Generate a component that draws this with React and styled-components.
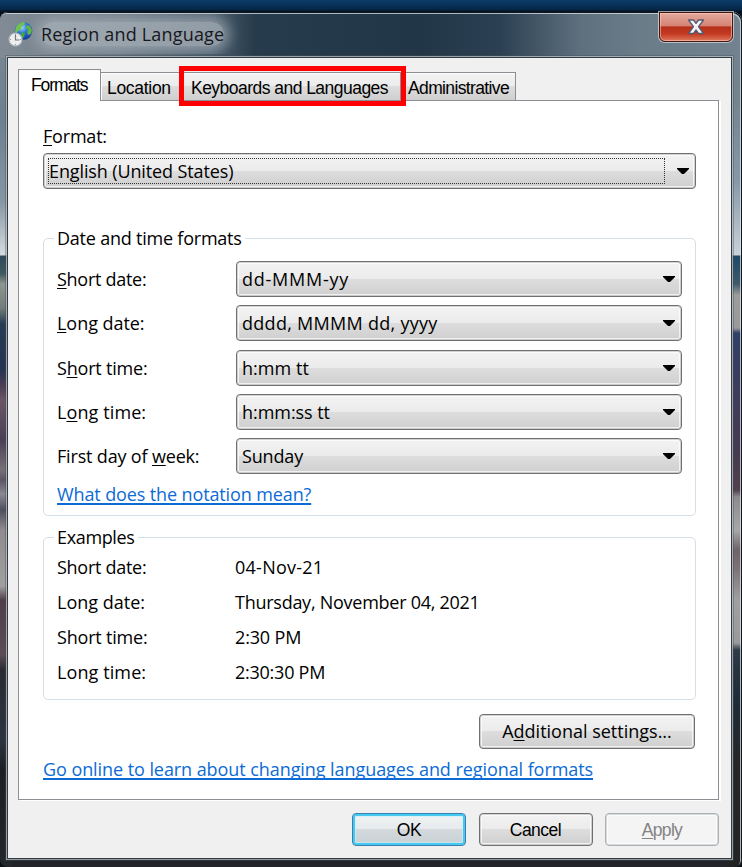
import React from 'react';
import styled, {createGlobalStyle, css} from 'styled-components';

const GlobalStyle = createGlobalStyle`
  *,
  *:before,
  *:after {
    box-sizing: border-box;
  }
  body {
    margin: 0;
    overflow: hidden;
  }
`;

const Desktop = styled.div`
  width: 742px;
  height: 867px;
  padding-top: 12px;
  overflow: hidden;
  background: linear-gradient(#0b3d69, #06294a 9px, #03111f 12px, #08131d 22px, #0c1116);
  color: #000;
  font-family: 'Open Sans', 'Noto Sans', sans-serif;
  font-size: 18px;
  line-height: 24px;
`;

const leftEdge = `linear-gradient(
  #7e8993 0, #6d808f 110px, #8797a4 190px, #d5dcdf 243px, #2e4a5a 244px,
  #3f5a5e 262px, #8f9692 272px, #727c78 296px, #263c55 312px, #253450 358px,
  #4d3d55 374px, #6a5566 388px, #4b3f55 428px, #767178 458px, #5b5566 468px,
  #8a8890 482px, #4e4e60 498px, #8f8b8e 518px, #a0a0a0 574px, #503f4a 588px,
  #5b4c55 643px, #2a2a33 658px, #2c3440 728px, #1d1f24 758px, #24272b 855px
)`;

const rightEdge = `linear-gradient(
  #6f7f8c 0, #74848f 90px, #8799a8 170px, #c9d2d9 243px, #1d4866 244px,
  #3f5a6c 272px, #9c9c99 283px, #9a9a9a 316px, #2f4066 321px, #3f3b5a 388px,
  #453a50 438px, #52404d 478px, #8d8a8c 485px, #a8a8a8 518px, #6e6468 538px,
  #7e7478 558px, #a0a0a0 588px, #9a9a9a 631px, #2d3a47 638px, #1d2c38 688px,
  #262626 748px, #232323 855px
)`;

const Window = styled.div`
  display: flex;
  flex-direction: column;
  width: 742px;
  height: 855px;
  border-radius: 8px 9px 8px 8px;
  background:
    ${leftEdge} 0 0 / 12px 100% no-repeat,
    ${rightEdge} 100% 0 / 12px 100% no-repeat,
    #22242a;
  box-shadow: inset -1px 1px 0 #10161b, inset -2px 2px 0 rgba(220, 228, 234, 0.75);
`;

const TitleBar = styled.div`
  display: flex;
  align-items: flex-start;
  height: 46px;
  padding-left: 8px;
  border-radius: 8px 9px 0 0;
  background: linear-gradient(90deg, #808b95, #6c7a86 120px, #4d5f6e 210px, #263b4b 255px, #213646 420px, #2b4053 500px, #5e707e 580px, #6b7c89 640px, #72828f);
  box-shadow: inset -1px 1px 0 #10161b, inset -2px 2px 0 rgba(220, 228, 234, 0.75);
`;

const TitleIcon = styled.svg`
  flex: none;
  width: 26px;
  height: 26px;
  margin-top: 9px;
`;

const Title = styled.div`
  height: 24px;
  margin: 10px auto 0 7px;
  border-radius: 12px;
  background: rgba(168, 178, 186, 0.75);
  box-shadow: 0 0 14px 5px rgba(168, 178, 186, 0.75);
  clip-path: inset(-8px -30px -8px -22px);
  color: #17171c;
  letter-spacing: 0.18px;
`;

const CloseButton = styled.div`
  display: flex;
  align-items: center;
  justify-content: center;
  width: 74px;
  height: 30px;
  margin-right: 9px;
  border: 1px solid #451512;
  border-radius: 0 0 6px 6px;
  background: linear-gradient(#e3a99d, #d58474 45%, #b7301a 50%, #c43a22 75%, #df7a5d);
  box-shadow: inset 0 0 0 1px rgba(255, 210, 195, 0.55), 0 0 0 1px rgba(215, 222, 228, 0.7);
`;

const Client = styled.div`
  display: flex;
  flex-direction: column;
  width: 723px;
  height: 800px;
  margin-left: 8px;
  padding-top: 11px;
  background: #f0f0f0;
  box-shadow: 0 0 0 1px #333a40, 0 0 0 2px rgba(205, 212, 218, 0.65), 0 0 0 3px rgba(70, 80, 88, 0.4);
`;

const Tabs = styled.div`
  display: flex;
  align-items: flex-end;
  height: 32px;
  padding-left: 10px;
`;

const Tab = styled.div`
  position: relative;
  width: ${({$width}) => $width}px;
  height: 28px;
  margin-bottom: 1px;
  padding-left: ${({$indent}) => $indent || 6}px;
  border: 1px solid #8c8e94;
  border-left-width: 0;
  border-bottom: none;
  background: linear-gradient(#f3f3f3, #ebebeb 50%, #dddddd 50%, #cfcfcf);
  box-shadow: inset 1px 1px 0 #fbfbfb;
  font: 17.5px/30px 'Liberation Sans', Arial, sans-serif;
  letter-spacing: ${({$track}) => $track || 0}px;
  white-space: nowrap;

  ${({$active}) => $active && css`
    z-index: 1;
    height: 32px;
    margin-bottom: 0;
    border-left-width: 1px;
    background: #fff;
  `}

  ${({$marked}) => $marked && css`
    z-index: 2;
    &:after {
      content: '';
      position: absolute;
      inset: -7px -6px -6px -1px;
      border: 5px solid #fe0000;
    }
  `}
`;

const Pane = styled.div`
  display: flex;
  flex-direction: column;
  width: 701px;
  height: 700px;
  margin: -1px 0 0 10px;
  padding: 22px 22px 0 24px;
  border: 1px solid #8c8e94;
  background: #fff;
  box-shadow: 2px 1px 0 #fff;
`;

const Label = styled.div`
  letter-spacing: ${({$track}) => $track || 0}px;
  line-height: 26px;
  white-space: nowrap;
`;

const Key = styled.span`
  text-decoration: underline;
  text-decoration-thickness: 1px;
  text-underline-offset: 2px;
`;

const Select = styled.div`
  display: flex;
  align-items: center;
  justify-content: space-between;
  height: 36px;
  margin-top: ${({$gap}) => $gap || 0}px;
  padding: 0 5px 0 4px;
  border: 1px solid #707070;
  border-radius: 4px;
  outline: 1px solid rgba(112, 112, 112, 0.3);
  outline-offset: -2px;
  background: linear-gradient(#f3f3f3, #ebebeb 50%, #dddddd 50%, #cfcfcf);
  box-shadow: inset 0 0 0 2px rgba(255, 255, 255, 0.7);
`;

const Value = styled.div`
  flex: 1;
  height: 26px;
  margin-right: ${({$focused}) => $focused ? 11 : 6}px;
  border: 1px ${({$focused}) => $focused ? 'dotted #333' : 'solid transparent'};
  letter-spacing: ${({$track}) => $track || 0}px;
  line-height: 24px;
`;

const Group = styled.div`
  height: ${({$height}) => $height}px;
  margin-top: ${({$gap}) => $gap}px;
  padding-left: 13px;
  border: 1px solid #d5dfe5;
  border-radius: 5px;
`;

const Legend = styled.div`
  width: max-content;
  height: 24px;
  margin: -13px 0 ${({$gap}) => $gap || 0}px -3px;
  padding: 0 3px;
  background: #fff;
  letter-spacing: ${({$track}) => $track || 0}px;
`;

const FormatGrid = styled.div`
  display: grid;
  grid-template-columns: 179px 446px;
  grid-auto-rows: 36px;
  row-gap: 8.25px;
  align-items: center;
`;

const ExampleGrid = styled.div`
  display: grid;
  grid-template-columns: 178px auto;
  grid-auto-rows: 35px;
  align-items: center;
`;

const TextLink = styled.a`
  display: block;
  width: max-content;
  margin-top: 8px;
  color: #0c6bd6;
  letter-spacing: ${({$track}) => $track || 0}px;
  text-decoration: underline;
  text-decoration-thickness: 1.5px;
  text-decoration-skip-ink: none;
  text-underline-offset: 2px;
  cursor: pointer;
`;

const variants = {
  normal: css`
    border-color: #707070;
    background: linear-gradient(#f3f3f3, #ebebeb 50%, #dddddd 50%, #cfcfcf);
    box-shadow: inset 0 0 0 1px rgba(112, 112, 112, 0.3), inset 0 0 0 2px rgba(255, 255, 255, 0.7);
  `,
  primary: css`
    border-color: #3c7fb1;
    background: linear-gradient(#f1f3f4, #e6eaec 50%, #d3d9dc 50%, #c9d1d4);
    box-shadow: inset 0 0 0 2px #45c9f0, inset 0 0 0 3px rgba(200, 240, 250, 0.6);
  `,
  disabled: css`
    border-color: #adb2b5;
    background: #f4f4f4;
    box-shadow: inset 0 0 0 1px #d5d8da, inset 0 0 0 2px #fcfcfc;
    color: #838383;
  `
};

const Button = styled.div`
  width: 114px;
  height: 33px;
  border: 1px solid;
  border-radius: 4px;
  font: 17.5px/33px 'Liberation Sans', Arial, sans-serif;
  letter-spacing: ${({$track}) => $track || 0}px;
  text-align: center;
  ${({$variant}) => variants[$variant || 'normal']}
`;

const SettingsButton = styled(Button)`
  align-self: flex-end;
  width: 216px;
  height: 35px;
  margin: 14px 1px 0 0;
  font: 18px/32px 'Open Sans', 'Noto Sans', sans-serif;
`;

const Footer = styled.div`
  display: flex;
  justify-content: flex-end;
  gap: 12.5px;
  padding: 13px 12px 0 0;
`;

const Arrow = () => (
  <svg width="14" height="8" viewBox="0 0 14 8">
    <path d="M1 1h12v1l-5 5h-2l-5-5z" fill="#000" />
  </svg>
);

const GlobeClock = () => (
  <TitleIcon viewBox="0 0 26 26">
    <defs>
      <radialGradient id="globe" cx="0.4" cy="0.3" r="0.75">
        <stop offset="0" stopColor="#9fdcf8" />
        <stop offset="0.45" stopColor="#2b6fd6" />
        <stop offset="1" stopColor="#0b2f93" />
      </radialGradient>
    </defs>
    <circle cx="15.5" cy="10" r="8.8" fill="url(#globe)" />
    <path d="M8 6c2-3 5-5 8-5l1 2-3 2-1 3-3 2-2 3-1-3z" fill="#6fc24b" />
    <path d="M19 4l3 1 2 4-1 4-3 1-1-3 1-2-2-2z" fill="#55b53c" />
    <path d="M14 11l3 1-1 4-2 2-2-3z" fill="#3fa548" />
    <circle cx="7.5" cy="18.5" r="6.5" fill="#eceef0" stroke="#b0b5ba" strokeWidth="1.2" />
    <path d="M7.5 14v5h4" fill="none" stroke="#72787e" strokeWidth="1.2" />
    <path d="M7.5 13v1M7.5 23v1M2 18.5h1M12 18.5h1" stroke="#999" />
  </TitleIcon>
);

const CloseMark = () => (
  <svg width="20" height="18" viewBox="0 0 20 18">
    <path
      d="M2.5 2h5L10 5.4 12.5 2h5l-5 6.7 5 6.8h-5L10 12l-2.5 3.5h-5l5-6.8z"
      fill="#f5f5f6"
      stroke="#565a70"
      strokeWidth="1.3"
      strokeLinejoin="round"
    />
  </svg>
);

const formats = [
  {id: 'sd', label: <><Key>S</Key>hort date:</>, track: -0.28, value: 'dd-MMM-yy', valueTrack: 0.75},
  {id: 'ld', label: <><Key>L</Key>ong date:</>, track: -0.05, value: 'dddd, MMMM dd, yyyy', valueTrack: 0.28},
  {id: 'st', label: <>S<Key>h</Key>ort time:</>, track: -0.2, value: 'h:mm tt', valueTrack: 0.05},
  {id: 'lt', label: <>L<Key>o</Key>ng time:</>, track: 0.1, value: 'h:mm:ss tt', valueTrack: -0.05},
  {id: 'fd', label: <>First day of <Key>w</Key>eek:</>, track: -0.17, value: 'Sunday', valueTrack: -0.15}
];

const examples = [
  {label: 'Short date:', labelTrack: -0.28, value: '04-Nov-21', track: 0.25},
  {label: 'Long date:', labelTrack: 0, value: 'Thursday, November 04, 2021', track: -0.26},
  {label: 'Short time:', labelTrack: -0.2, value: '2:30 PM', track: -0.15},
  {label: 'Long time:', labelTrack: 0.1, value: '2:30:30 PM', track: -0.25}
];

const App = () => (
  <Desktop>
    <GlobalStyle />
    <Window>
      <TitleBar>
        <GlobeClock />
        <Title>Region and Language</Title>
        <CloseButton><CloseMark /></CloseButton>
      </TitleBar>
      <Client>
        <Tabs>
          <Tab $active $width={83} $indent={12} $track={-1.1}>Formats</Tab>
          <Tab $width={79} $track={-0.3}>Location</Tab>
          <Tab $marked $width={221} $indent={11} $track={-0.53}>Keyboards and Languages</Tab>
          <Tab $width={115} $indent={7} $track={-0.63}>Administrative</Tab>
        </Tabs>
        <Pane>
          <Label $track={-0.2}><Key>F</Key>ormat:</Label>
          <Select $focused $gap={4}>
            <Value $focused $track={-0.12}>English (United States)</Value>
            <Arrow />
          </Select>
          <Group $height={278} $gap={49}>
            <Legend $gap={11} $track={-0.22}>Date and time formats</Legend>
            <FormatGrid>
              {formats.map(({id, label, track, value, valueTrack}) => (
                <React.Fragment key={id}>
                  <Label $track={track}>{label}</Label>
                  <Select>
                    <Value $track={valueTrack}>{value}</Value>
                    <Arrow />
                  </Select>
                </React.Fragment>
              ))}
            </FormatGrid>
            <TextLink $track={-0.12}>What does the notation mean?</TextLink>
          </Group>
          <Group $height={163} $gap={21}>
            <Legend $track={-0.35}>Examples</Legend>
            <ExampleGrid>
              {examples.map(({label, labelTrack, value, track}) => (
                <React.Fragment key={label}>
                  <Label $track={labelTrack}>{label}</Label>
                  <Label $track={track}>{value}</Label>
                </React.Fragment>
              ))}
            </ExampleGrid>
          </Group>
          <SettingsButton>A<Key>d</Key>ditional settings...</SettingsButton>
          <TextLink $track={-0.07}>Go online to learn about changing languages and regional formats</TextLink>
        </Pane>
        <Footer>
          <Button $variant="primary" $track={-0.5}>OK</Button>
          <Button $track={-0.5}>Cancel</Button>
          <Button $variant="disabled" $track={-0.7}><Key>A</Key>pply</Button>
        </Footer>
      </Client>
    </Window>
  </Desktop>
);

export default App;
